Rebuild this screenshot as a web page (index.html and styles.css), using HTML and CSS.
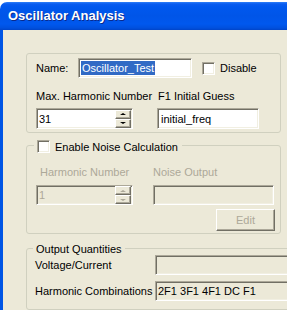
FILE: index.html
```html
<!DOCTYPE html>
<html lang="en">
<head>
  <meta charset="UTF-8" />
  <title>Oscillator Analysis</title>
  <link rel="stylesheet" href="styles.css">
</head>
<body>

<div class="window">
  <div class="titlebar">Oscillator Analysis</div>

  <div class="client">

    <!-- General settings -->
    <div class="group group-main">
      <div class="row name-row">
        <span class="name-label">Name:</span>
        <div class="field name-field"><span class="selected">Oscillator_Test</span></div>
        <span class="check"></span>
        <span class="check-label">Disable</span>
      </div>

      <div class="row label-row">
        <span class="col-left">Max. Harmonic Number</span>
        <span class="col-right">F1 Initial Guess</span>
      </div>

      <div class="row field-row">
        <div class="field spin">
          <span class="spin-value">31</span>
          <div class="spin-buttons">
            <span class="spin-btn"><span class="arrow up"></span></span>
            <span class="spin-btn"><span class="arrow down"></span></span>
          </div>
        </div>
        <div class="field guess-field">initial_freq</div>
      </div>
    </div>

    <!-- Noise -->
    <div class="group group-noise">
      <div class="legend legend-check">
        <span class="check"></span>
        <span class="check-label">Enable Noise Calculation</span>
      </div>

      <div class="row label-row disabled">
        <span class="col-left">Harmonic Number</span>
        <span class="col-noise">Noise Output</span>
      </div>

      <div class="row noise-fields">
        <div class="field spin off">
          <span class="spin-value">1</span>
          <div class="spin-buttons">
            <span class="spin-btn"><span class="arrow up"></span></span>
            <span class="spin-btn"><span class="arrow down"></span></span>
          </div>
        </div>
        <div class="field off noise-field"></div>
      </div>

      <div class="row edit-row">
        <button class="btn" disabled>Edit</button>
      </div>
    </div>

    <!-- Output -->
    <div class="group group-output">
      <div class="legend legend-text">Output Quantities</div>

      <div class="row out-row">
        <span class="out-label">Voltage/Current</span>
        <div class="field off out-field"></div>
      </div>
      <div class="row out-row">
        <span class="out-label">Harmonic Combinations</span>
        <div class="field off out-field">2F1 3F1 4F1 DC F1</div>
      </div>
    </div>

  </div>
</div>

</body>
</html>
```

FILE: styles.css
```css
body {
  margin: 0;
  background: #fff;
  font-family: 'Liberation Sans', Arial, sans-serif;
  font-size: 11px;
  color: #000;
  overflow: hidden;
}
.window {
  margin-top: 2px;
  width: 287px;
}
.titlebar {
  height: 28px;
  box-sizing: border-box;
  padding-left: 8px;
  line-height: 28px;
  border-radius: 7px 0 0 0;
  background: linear-gradient(#2e7ff8 0, #0a5cf0 2px, #0058ee 5px, #0055e8 14px, #0058ee 22px, #0050de 26px, #0044c8 28px);
  color: #fff;
  font-weight: bold;
  font-size: 13px;
  text-shadow: 1px 1px 0 #0a2a8c;
}
.client {
  height: 257px;
  overflow: hidden;
  background: #ece9d8;
  border-left: 3px solid #0055e5;
  padding: 23px 0 0 23px;
}

/* group boxes */
.group {
  position: relative;
  box-sizing: border-box;
  border: 1px solid #d0d0bf;
  border-radius: 3px;
}
.group-main {
  width: 255px;
  height: 80px;
  padding: 4px 0 0 9px;
}
.group-noise {
  width: 255px;
  height: 89px;
  margin-top: 12px;
  padding: 19px 0 0 9px;
}
.group-output {
  width: 320px;
  height: 62px;
  margin-top: 14px;
  padding: 6px 0 0 8px;
}
.legend {
  position: absolute;
  top: -7px;
  left: 6px;
  padding: 0 3px;
  background: #ece9d8;
  display: flex;
  align-items: center;
  height: 13px;
}
.legend-check {
  left: 7px;
  top: -6px;
  padding-right: 4px;
}

.row {
  display: flex;
  align-items: center;
}

/* sunken fields */
.field {
  box-sizing: border-box;
  background: #fff;
  border: 1px solid;
  border-color: #aca899 #fff #fff #aca899;
  box-shadow: inset 1px 1px 0 #716f64, inset -1px -1px 0 #f1efe2;
  padding: 0 3px;
  display: flex;
  align-items: center;
}
.field.off {
  background: #ece9d8;
  color: #aca899;
}

.name-row {
  height: 20px;
}
.name-label {
  width: 42px;
}
.name-field {
  width: 114px;
  height: 20px;
  padding-left: 2px;
}
.selected {
  background: #316ac5;
  color: #fff;
  line-height: 14px;
  padding: 0 1px;
}
.check {
  width: 13px;
  height: 13px;
  box-sizing: border-box;
  background: #fff;
  border: 1px solid;
  border-color: #aca899 #fff #fff #aca899;
  box-shadow: inset 1px 1px 0 #716f64, inset -1px -1px 0 #f1efe2;
}
.name-row .check {
  margin-left: 10px;
}
.check-label {
  margin-left: 5px;
}

.label-row {
  height: 13px;
  margin-top: 11px;
}
.group-noise .label-row {
  margin-top: 0;
}
.disabled {
  color: #aca899;
}
.col-left {
  width: 122px;
}
.disabled .col-left {
  padding-left: 4px;
  width: 113px;
}

.field-row {
  margin-top: 6px;
}
.spin {
  width: 97px;
  height: 21px;
  padding: 0 0 0 2px;
  justify-content: space-between;
}
.spin-value {
  flex: 1;
}
.spin-buttons {
  display: flex;
  flex-direction: column;
  margin-right: 1px;
}
.spin-btn {
  width: 16px;
  height: 9px;
  box-sizing: border-box;
  background: #ece9d8;
  border: 1px solid;
  border-color: #fff #716f64 #716f64 #fff;
  box-shadow: inset -1px -1px 0 #aca899;
  display: flex;
  align-items: center;
  justify-content: center;
}
.arrow {
  width: 0;
  height: 0;
  border-left: 3px solid transparent;
  border-right: 3px solid transparent;
}
.arrow.up {
  border-bottom: 2px solid #000;
}
.arrow.down {
  border-top: 2px solid #000;
}
.off .arrow.up {
  border-bottom-color: #aca899;
}
.off .arrow.down {
  border-top-color: #aca899;
}
.guess-field {
  width: 102px;
  height: 21px;
  margin-left: 24px;
}

.noise-fields {
  margin-top: 7px;
}
.noise-fields .spin {
  height: 20px;
}
.noise-field {
  width: 121px;
  height: 20px;
  margin-left: 20px;
}
.edit-row {
  margin-top: 4px;
  justify-content: flex-end;
  padding-right: 5px;
}
.btn {
  width: 59px;
  height: 22px;
  font-family: inherit;
  font-size: 11px;
  color: #aca899;
  background: #ece9d8;
  border: 1px solid;
  border-color: #fff #716f64 #716f64 #fff;
  box-shadow: inset -1px -1px 0 #aca899;
  padding: 0;
}

.out-row {
  height: 20px;
  margin-bottom: 6px;
}
.out-label {
  width: 120px;
}
.field.off.out-field {
  flex: 1;
  height: 20px;
  color: #000;
  padding-left: 2px;
}
```
